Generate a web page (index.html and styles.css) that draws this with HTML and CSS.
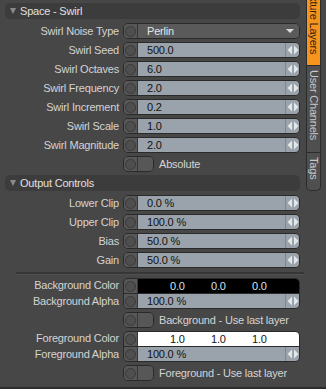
FILE: index.html
```html
<!DOCTYPE html>
<html>
<head>
<meta charset="utf-8">
<link rel="stylesheet" href="styles.css">
</head>
<body>
<div class="app">
  <div class="panel">
    <div class="head"><span class="tri"></span><span>Space - Swirl</span></div>

    <div class="row"><div class="lbl">Swirl Noise Type</div><div class="ctl"><span class="chan"><i></i></span><div class="field drop"><span class="val">Perlin</span><span class="caret"></span></div></div></div>
    <div class="row"><div class="lbl">Swirl Seed</div><div class="ctl"><span class="chan"><i></i></span><div class="field num"><span class="val">500.0</span><span class="spin"><svg width="12" height="10" viewBox="0 0 12 10"><polygon points="0.5,5 5,0.5 5,9.5"/><polygon points="11.5,5 7,0.5 7,9.5"/></svg></span></div></div></div>
    <div class="row"><div class="lbl">Swirl Octaves</div><div class="ctl"><span class="chan"><i></i></span><div class="field num"><span class="val">6.0</span><span class="spin"><svg width="12" height="10" viewBox="0 0 12 10"><polygon points="0.5,5 5,0.5 5,9.5"/><polygon points="11.5,5 7,0.5 7,9.5"/></svg></span></div></div></div>
    <div class="row"><div class="lbl">Swirl Frequency</div><div class="ctl"><span class="chan"><i></i></span><div class="field num"><span class="val">2.0</span><span class="spin"><svg width="12" height="10" viewBox="0 0 12 10"><polygon points="0.5,5 5,0.5 5,9.5"/><polygon points="11.5,5 7,0.5 7,9.5"/></svg></span></div></div></div>
    <div class="row"><div class="lbl">Swirl Increment</div><div class="ctl"><span class="chan"><i></i></span><div class="field num"><span class="val">0.2</span><span class="spin"><svg width="12" height="10" viewBox="0 0 12 10"><polygon points="0.5,5 5,0.5 5,9.5"/><polygon points="11.5,5 7,0.5 7,9.5"/></svg></span></div></div></div>
    <div class="row"><div class="lbl">Swirl Scale</div><div class="ctl"><span class="chan"><i></i></span><div class="field num"><span class="val">1.0</span><span class="spin"><svg width="12" height="10" viewBox="0 0 12 10"><polygon points="0.5,5 5,0.5 5,9.5"/><polygon points="11.5,5 7,0.5 7,9.5"/></svg></span></div></div></div>
    <div class="row"><div class="lbl">Swirl Magnitude</div><div class="ctl"><span class="chan"><i></i></span><div class="field num"><span class="val">2.0</span><span class="spin"><svg width="12" height="10" viewBox="0 0 12 10"><polygon points="0.5,5 5,0.5 5,9.5"/><polygon points="11.5,5 7,0.5 7,9.5"/></svg></span></div></div></div>
    <div class="row"><div class="lbl"></div><div class="tog"><span class="chan"><i></i></span><span class="half"></span></div><span class="tlabel">Absolute</span></div>

    <div class="head"><span class="tri"></span><span>Output Controls</span></div>

    <div class="row"><div class="lbl">Lower Clip</div><div class="ctl"><span class="chan"><i></i></span><div class="field num"><span class="val">0.0 %</span><span class="spin"><svg width="12" height="10" viewBox="0 0 12 10"><polygon points="0.5,5 5,0.5 5,9.5"/><polygon points="11.5,5 7,0.5 7,9.5"/></svg></span></div></div></div>
    <div class="row"><div class="lbl">Upper Clip</div><div class="ctl"><span class="chan"><i></i></span><div class="field num"><span class="val">100.0 %</span><span class="spin"><svg width="12" height="10" viewBox="0 0 12 10"><polygon points="0.5,5 5,0.5 5,9.5"/><polygon points="11.5,5 7,0.5 7,9.5"/></svg></span></div></div></div>
    <div class="row"><div class="lbl">Bias</div><div class="ctl"><span class="chan"><i></i></span><div class="field num"><span class="val">50.0 %</span><span class="spin"><svg width="12" height="10" viewBox="0 0 12 10"><polygon points="0.5,5 5,0.5 5,9.5"/><polygon points="11.5,5 7,0.5 7,9.5"/></svg></span></div></div></div>
    <div class="row"><div class="lbl">Gain</div><div class="ctl"><span class="chan"><i></i></span><div class="field num"><span class="val">50.0 %</span><span class="spin"><svg width="12" height="10" viewBox="0 0 12 10"><polygon points="0.5,5 5,0.5 5,9.5"/><polygon points="11.5,5 7,0.5 7,9.5"/></svg></span></div></div></div>

    <div class="sep"></div>

    <div class="row pair">
      <div class="lbls"><div class="plbl">Background Color</div><div class="plbl">Background Alpha</div></div>
      <div class="grp">
        <div class="sub"><span class="chan"><i></i></span><div class="field colr dark"><span>0.0</span><span>0.0</span><span>0.0</span></div></div>
        <div class="sub"><span class="chan"><i></i></span><div class="field num"><span class="val">100.0 %</span><span class="spin"><svg width="12" height="10" viewBox="0 0 12 10"><polygon points="0.5,5 5,0.5 5,9.5"/><polygon points="11.5,5 7,0.5 7,9.5"/></svg></span></div></div>
      </div>
    </div>
    <div class="row"><div class="lbl"></div><div class="tog"><span class="chan"><i></i></span><span class="half"></span></div><span class="tlabel">Background - Use last layer</span></div>

    <div class="row pair">
      <div class="lbls"><div class="plbl">Foreground Color</div><div class="plbl">Foreground Alpha</div></div>
      <div class="grp">
        <div class="sub"><span class="chan"><i></i></span><div class="field colr light"><span>1.0</span><span>1.0</span><span>1.0</span></div></div>
        <div class="sub"><span class="chan"><i></i></span><div class="field num"><span class="val">100.0 %</span><span class="spin"><svg width="12" height="10" viewBox="0 0 12 10"><polygon points="0.5,5 5,0.5 5,9.5"/><polygon points="11.5,5 7,0.5 7,9.5"/></svg></span></div></div>
      </div>
    </div>
    <div class="row"><div class="lbl"></div><div class="tog"><span class="chan"><i></i></span><span class="half"></span></div><span class="tlabel">Foreground - Use last layer</span></div>
  </div>

  <div class="tabs">
    <div class="tab active">Texture Layers</div>
    <div class="tab">User Channels</div>
    <div class="tab last">Tags</div>
  </div>
</div>
</body>
</html>
```

FILE: styles.css
```css
* { box-sizing: border-box; margin: 0; padding: 0; }
html, body { width: 326px; height: 389px; overflow: hidden; }
body {
  background: #474747;
  font-family: "Liberation Sans", Arial, sans-serif;
  font-size: 11px;
  letter-spacing: -0.2px;
  color: #d4d4d4;
}
.app {
  display: flex;
  height: 389px;
  border-bottom: 2px solid #2c2c2c;
}
.panel {
  width: 306px;
  flex: none;
  padding: 3px 6px 0 5px;
}
.head {
  height: 16px;
  background: #3c3c3c;
  border-radius: 5px;
  display: flex;
  align-items: center;
  padding-left: 5px;
  gap: 4px;
  color: #e0e0e0;
  font-size: 11px;
  margin-bottom: 4px;
}
.tri {
  width: 0; height: 0;
  border-left: 3px solid transparent;
  border-right: 3px solid transparent;
  border-top: 6px solid #8a8a8a;
}
.row {
  display: flex;
  align-items: center;
  height: 16px;
  margin-bottom: 3px;
}
.lbl {
  width: 114px;
  flex: none;
  text-align: right;
  white-space: nowrap;
}
.ctl {
  margin-left: 4px;
  width: 177px;
  height: 16px;
  display: flex;
  border: 1px solid #2a2a2a;
  border-radius: 5px;
  overflow: hidden;
  background: #555;
}
.chan {
  width: 14px;
  flex: none;
  display: flex;
  align-items: center;
  justify-content: center;
  background: #575757;
  border-right: 1px solid #363636;
}
.chan i {
  display: block;
  width: 11px;
  height: 11px;
  border-radius: 50%;
  border: 1px solid #3a3a3a;
  background: #4f4f4f;
}
.field {
  flex: 1;
  display: flex;
  align-items: center;
  height: 100%;
}
.num { background: #9aa3ab; color: #121212; }
.val { flex: 1; padding-left: 9px; white-space: nowrap; }
.spin {
  width: 14px;
  height: 100%;
  border-left: 1px solid #7f878e;
  display: flex;
  align-items: center;
  justify-content: center;
}
.spin svg { fill: #e2e6e9; }
.drop { background: #5a5a5a; color: #e4e4e4; }
.caret {
  width: 0; height: 0;
  border-left: 4px solid transparent;
  border-right: 4px solid transparent;
  border-top: 4px solid #dcdcdc;
  margin-right: 5px;
}
.tog {
  margin-left: 4px;
  width: 31px;
  height: 16px;
  display: flex;
  border: 1px solid #2a2a2a;
  border-radius: 5px;
  overflow: hidden;
}
.half { flex: 1; background: #575757; }
.tlabel { margin-left: 5px; white-space: nowrap; }
.sep {
  height: 7px;
  margin: 0 -4px 0 11px;
  padding-top: 1px;
}
.sep::before {
  content: "";
  display: block;
  height: 2px;
  background: #363636;
  border-bottom: 1px solid #505050;
}
.pair { height: 31px; align-items: stretch; }
.lbls {
  width: 114px;
  flex: none;
  display: flex;
  flex-direction: column;
  text-align: right;
  white-space: nowrap;
}
.plbl { height: 15px; line-height: 15px; }
.plbl + .plbl { margin-top: 1px; }
.grp {
  margin-left: 4px;
  width: 177px;
  height: 31px;
  display: flex;
  flex-direction: column;
  border: 1px solid #2a2a2a;
  border-radius: 5px;
  overflow: hidden;
  background: #2a2a2a;
  gap: 1px;
}
.sub { display: flex; height: 14px; }
.colr { padding-left: 32px; }
.colr span { width: 41px; }
.dark { background: #000; color: #d4e2ee; }
.light { background: #fff; color: #141414; }

.tabs {
  width: 20px;
  flex: none;
  display: flex;
  flex-direction: column;
  align-items: flex-start;
}
.tab {
  width: 15px;
  writing-mode: vertical-rl;
  padding: 4px 0 11px;
  background: #4f4f4f;
  border: 1px solid #2c2c2c;
  border-top: none;
  color: #c8c8c8;
  font-size: 11px;
  line-height: 13px;
  white-space: nowrap;
}
.active {
  background: #f7941e;
  color: #2e2410;
  margin-top: -19px;
}
.last { border-radius: 0 0 5px 5px; }
```
